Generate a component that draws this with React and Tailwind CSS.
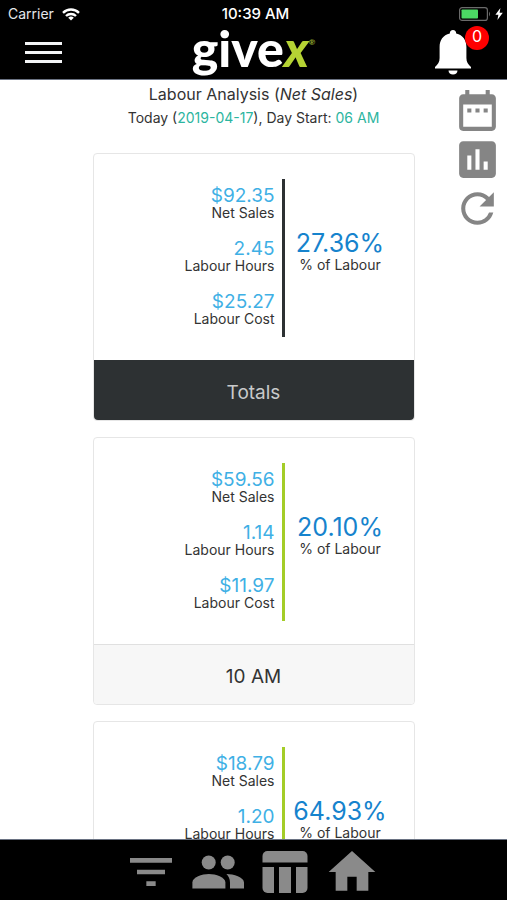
import { MdDateRange, MdAssessment, MdRefresh, MdFilterList, MdHome } from "react-icons/md";

const cards = [
  {
    id: "totals",
    label: "Totals",
    sales: "$92.35",
    hours: "2.45",
    cost: "$25.27",
    percent: "27.36%",
    total: true,
  },
  {
    id: "10am",
    label: "10 AM",
    sales: "$59.56",
    hours: "1.14",
    cost: "$11.97",
    percent: "20.10%",
  },
  {
    id: "11am",
    label: "11 AM",
    sales: "$18.79",
    hours: "1.20",
    cost: "$12.20",
    percent: "64.93%",
  },
];

function StatusBar() {
  return (
    <div className="grid grid-cols-3 items-center h-7 pl-2 pr-1 text-sm">
      <div className="flex items-center gap-2 text-gray-200">
        <span>Carrier</span>
        <svg viewBox="0 0 18 13" className="w-[18px] h-[13px]" fill="none" stroke="#fff" strokeWidth="2.4">
          <path d="M1 4.8 A11.5 11.5 0 0 1 17 4.8" />
          <path d="M4 8 A7.2 7.2 0 0 1 14 8" />
          <path d="M9 12.6 L6.2 9.8 A4 4 0 0 1 11.8 9.8 Z" fill="#fff" stroke="none" />
        </svg>
      </div>
      <span className="text-center text-[15px] leading-4 font-medium">10:39 AM</span>
      <div className="flex items-center justify-end gap-1">
        <svg viewBox="0 0 32 14" className="w-8 h-3.5">
          <rect x="0.6" y="0.6" width="27.8" height="12.8" rx="2.5" fill="none" stroke="#6b6b6b" strokeWidth="1.2" />
          <rect x="2.5" y="2.5" width="16.5" height="9" rx="0.8" fill="#4cd964" />
          <path d="M30 4.5 Q32 7 30 9.5 Z" fill="#6b6b6b" />
        </svg>
        <svg viewBox="0 0 8 12" className="w-2 h-3" fill="#fff">
          <path d="M5.4 0 L0.4 6.8 H3.4 L2.4 12 L7.8 4.8 H4.6 Z" />
        </svg>
      </div>
    </div>
  );
}

function Header() {
  return (
    <header className="shrink-0 bg-black text-white border-b border-gray-500">
      <StatusBar />
      <div className="grid grid-cols-3 items-center h-[51px] px-[18px] pb-0.5">
        <button type="button" aria-label="Menu" className="flex flex-col gap-[6px] w-[51px] px-[7px]">
          <span className="h-[3px] bg-gray-100" />
          <span className="h-[3px] bg-gray-100" />
          <span className="h-[3px] bg-gray-100" />
        </button>
        <div className="self-start flex justify-center font-['Lato',sans-serif] text-[50px] leading-10 font-black">
          <span>give</span>
          <span className="italic text-[#b5d334]">x</span>
          <span className="text-[8px] leading-7 text-[#8a9f2c]">®</span>
        </div>
        <div className="flex justify-end">
          <button type="button" aria-label="Notifications" className="relative w-[54px] h-[46px]">
            <svg viewBox="0 0 36 45" className="w-9 h-[45px]" fill="#fff">
              <path d="M18 0 C20 0 21.2 1.4 21.2 3.6 C28 5.2 31.4 10.4 31.4 17 V28 C31.4 32 33 34.5 36 37 V38.5 H0 V37 C3 34.5 4.6 32 4.6 28 V17 C4.6 10.4 8 5.2 14.8 3.6 C14.8 1.4 16 0 18 0 Z" />
              <path d="M13.5 40.5 H22.5 C22.5 43 20.5 44.6 18 44.6 C15.5 44.6 13.5 43 13.5 40.5 Z" />
            </svg>
            <span className="absolute -top-1 right-0 size-6 rounded-full bg-[#fe0000] text-base leading-5 text-center">
              0
            </span>
          </button>
        </div>
      </div>
    </header>
  );
}

function Stat({ value, label }) {
  return (
    <div className="flex flex-col">
      <span className="text-[19px] leading-[18px] text-[#3fb0e5]">{value}</span>
      <span className="text-sm leading-4">{label}</span>
    </div>
  );
}

function LabourCard({ card }) {
  return (
    <section className="border border-[#e6e6e6] rounded">
      <div className="grid grid-cols-[188px_1fr] pt-[25px] pb-[23px]">
        <div className="flex flex-col gap-[19px] pt-2 pl-2 pr-[7px] h-[158px] items-end text-right">
          <Stat value={card.sales} label="Net Sales" />
          <Stat value={card.hours} label="Labour Hours" />
          <Stat value={card.cost} label="Labour Cost" />
        </div>
        <div
          className={`flex flex-col justify-center pb-3.5 pr-[18px] border-l-3 text-center ${
            card.total ? "border-[#2d3133]" : "border-[#a4cd28]"
          }`}
        >
          <span className="text-[25px] leading-7 text-[#1683cd]">{card.percent}</span>
          <span className="text-sm leading-4">% of Labour</span>
        </div>
      </div>
      <h2
        className={`flex items-center justify-center h-15 pt-1.5 text-[19px] rounded-b ${
          card.total ? "bg-[#2d3133] text-[#c8cacb]" : "bg-[#f7f7f7] border-t border-[#e0e0e0]"
        }`}
      >
        {card.label}
      </h2>
    </section>
  );
}

function Footer() {
  return (
    <nav className="shrink-0 flex justify-center gap-[11px] h-[61px] pt-1 pr-1 bg-black border-t border-gray-500 text-[#8a8a8a]">
      <button type="button" aria-label="Filter">
        <MdFilterList className="size-14" />
      </button>
      <button type="button" aria-label="Employees">
        <svg viewBox="0 0 56 56" className="size-14" fill="currentColor">
          <circle cx="18.7" cy="18.5" r="7" />
          <circle cx="37.7" cy="18.5" r="7" />
          <path d="M2.4 44.5 V38.6 C2.4 33 12 30 18.9 30 C25.8 30 35.4 33 35.4 38.6 V44.5 Z" />
          <path d="M36.4 30 C43.500 30 54 33 54 38.6 V44.500 H40 V38.6 C40 35 38.6 32.2 36.4 30 Z" />
        </svg>
      </button>
      <button type="button" aria-label="Table">
        <svg viewBox="0 0 56 56" className="size-14" fill="currentColor">
          <path d="M5.5 18.5 V12 A5 5 0 0 1 10.5 7 H45.5 A5 5 0 0 1 50.5 12 V18.5 Z" />
          <path d="M5.5 23 H17 V49 H10.5 A5 5 0 0 1 5.5 44 Z" />
          <path d="M22 23 H34 V49 H22 Z" />
          <path d="M39 23 H50.5 V44 A5 5 0 0 1 45.5 49 H39 Z" />
        </svg>
      </button>
      <button type="button" aria-label="Home">
        <MdHome className="size-14" />
      </button>
    </nav>
  );
}

function App() {
  return (
    <div className="flex flex-col h-screen bg-white font-['Inter',sans-serif] text-[#333]">
      <Header />
      <main className="flex-1 min-h-0 overflow-y-auto [scrollbar-width:none] grid grid-cols-[1fr_minmax(0,322px)_1fr]">
        <div className="col-start-2 pb-4">
          <div className="flex flex-col items-center pt-0.5 pb-[23px] whitespace-nowrap">
            <h1 className="text-base leading-6">
              Labour Analysis (<em>Net Sales</em>)
            </h1>
            <p className="text-sm leading-6">
              Today (<span className="text-[#2cb5a0]">2019-04-17</span>), Day Start:{" "}
              <span className="text-[#2cb5a0]">06 AM</span>
            </p>
          </div>
          <div className="flex flex-col gap-4">
            {cards.map((card) => (
              <LabourCard key={card.id} card={card} />
            ))}
          </div>
        </div>
        <div className="flex flex-col items-end pt-1.5 pr-[5px] text-[#858585]">
          <button type="button" aria-label="Pick date">
            <MdDateRange className="size-[49px]" />
          </button>
          <button type="button" aria-label="Chart">
            <MdAssessment className="size-[49px]" />
          </button>
          <button type="button" aria-label="Refresh">
            <MdRefresh className="size-[49px]" />
          </button>
        </div>
      </main>
      <Footer />
    </div>
  );
}

export default App;
